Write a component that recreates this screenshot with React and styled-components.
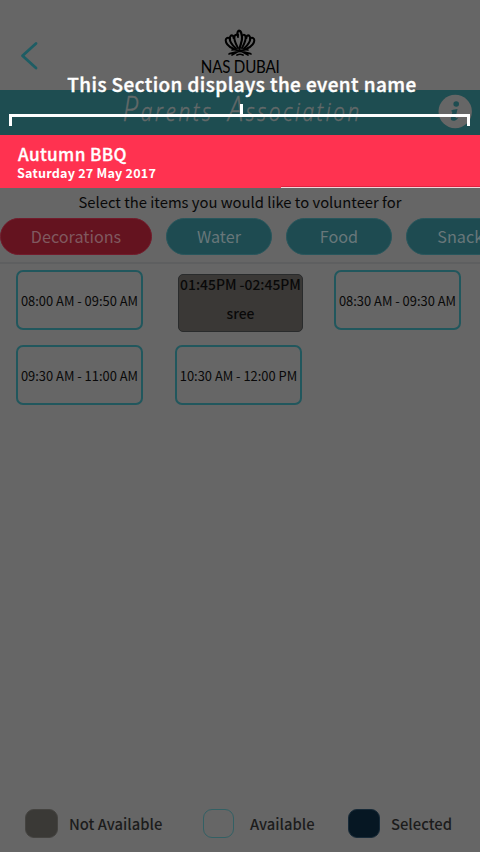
import React from 'react';
import styled, { createGlobalStyle } from 'styled-components';

const GlobalStyle = createGlobalStyle`
  * { box-sizing: border-box; }
  body { margin: 0; background: #666; overflow: hidden; }
`;

const Screen = styled.div`
  position: relative;
  display: flex;
  flex-direction: column;
  width: 480px;
  height: 852px;
  overflow: hidden;
  background: #666;
  color: #090909;
  font-family: "Noto Sans CJK SC", "Noto Sans", sans-serif;
  white-space: nowrap;
`;

const Header = styled.header`
  display: grid;
  grid-template-columns: 60px 360px 60px;
  height: 90px;
  flex: none;
`;

const BackButton = styled.button`
  display: block;
  align-self: start;
  border: 0;
  padding: 40px 0 0 20px;
  background: none;
  text-align: left;
  svg { display: block; }
`;

const Brand = styled.div`
  display: flex;
  flex-direction: column;
  align-items: center;
  padding-top: 28px;
  svg { display: block; }
`;

const BrandName = styled.div`
  height: 18px;
  font: 400 17px/18px Lato, sans-serif;
  letter-spacing: -0.25px;
  color: #000;
  transform: scaleX(0.89);
`;

const TitleBar = styled.div`
  display: grid;
  grid-template-columns: 60px 360px 60px;
  height: 45px;
  flex: none;
  background: #1e4d51;
`;

const Title = styled.h1`
  grid-column: 2;
  margin: 0;
  height: 45px;
  text-align: center;
  font: italic 300 26px/42px "Open Sans", sans-serif;
  letter-spacing: 3.3px;
  word-spacing: 8px;
  color: #636969;
  padding-left: 6px;
  transform: scaleX(0.8);
  &, span { -webkit-text-stroke: 0.5px #636969; }
`;

const Initial = styled.span`
  font-size: 34px;
  line-height: 1px;
`;

const InfoIcon = styled.div`
  padding: 4px 0 0 18px;
  svg { display: block; }
`;

const EventBanner = styled.section`
  display: flex;
  flex-direction: column;
  align-items: flex-start;
  position: relative;
  height: 53px;
  flex: none;
  padding: 8px 17px 0;
  background: #ff3250;
  color: #fff;
  &::after {
    content: "";
    position: absolute;
    left: 281px;
    right: 0;
    bottom: 0;
    height: 2px;
    background: linear-gradient(#e0213f 50%, #efd5d9 50%);
  }
`;

const EventName = styled.div`
  height: 20px;
  font-size: 17.2px;
  line-height: 21px;
  font-weight: 500;
  letter-spacing: 0.35px;
  padding-left: 1px;
  -webkit-text-stroke: 0.3px #fff;
`;

const EventDate = styled.div`
  font-size: 12.6px;
  line-height: 19px;
  font-weight: 700;
  letter-spacing: 0.2px;
`;

const Prompt = styled.p`
  margin: 0;
  height: 29px;
  flex: none;
  text-align: center;
  font-size: 14.8px;
  line-height: 28px;
`;

const Chips = styled.nav`
  display: flex;
  gap: 14px;
  height: 47px;
  flex: none;
  padding-top: 1px;
  border-bottom: 2px solid #5e5f60;
`;

const Chip = styled.button`
  flex: none;
  width: ${p => p.$w}px;
  height: 37px;
  padding: 0;
  border: 1px solid ${p => (p.$active ? '#721c2c' : '#28565c')};
  border-radius: 19px;
  background: ${p => (p.$active ? '#64131f' : '#1e4b51')};
  color: ${p => (p.$active ? '#80595f' : '#68777a')};
  font: 400 16.2px/35px "Noto Sans CJK SC", sans-serif;
`;

const Slots = styled.main`
  display: grid;
  grid-template-columns: repeat(3, 127px);
  grid-auto-rows: 60px;
  gap: 15px 32px;
  padding: 6px 16px 0;
  flex: 1;
  align-content: start;
`;

const Slot = styled.button`
  padding: 1px 0 0;
  border: 2px solid #21575d;
  border-radius: 7px;
  background: #666;
  color: #090909;
  font: 400 12.9px/55px "Noto Sans CJK SC", sans-serif;
`;

const TakenSlot = styled.div`
  width: 125px;
  height: 58px;
  margin: 4px 0 0 3px;
  border: 1px solid #292b2c;
  border-radius: 5px;
  background: #3a3836;
  text-align: center;
  font-size: 13.9px;
  line-height: 30px;
  font-weight: 500;
`;

const TakenTime = styled.div`
  height: 23px;
  line-height: 18px;
`;

const Legend = styled.footer`
  display: grid;
  grid-template-columns: 178px 145px 1fr;
  height: 57px;
  flex: none;
  padding: 14px 0 0 25px;
`;

const LegendItem = styled.div`
  display: flex;
  gap: ${p => p.$gap}px;
  height: 29px;
  font-size: 14.8px;
  line-height: 29px;
  font-weight: 500;
  color: #1c1c1c;
`;

const Swatch = styled.span`
  flex: none;
  width: ${p => p.$w}px;
  height: 29px;
  border: 1px solid ${p => p.$line};
  border-radius: 9px;
  background: ${p => p.$fill};
`;

const Coach = styled.div`
  position: absolute;
  top: 70px;
  left: 9px;
  width: 461px;
  color: #fff;
  svg { display: block; }
`;

const CoachText = styled.div`
  height: 34px;
  padding-left: 5px;
  text-align: center;
  font-size: 18.9px;
  line-height: 28px;
  font-weight: 500;
  letter-spacing: 0.45px;
  -webkit-text-stroke: 0.4px #fff;
`;

const CrownLogo = () => (
  <svg width="32" height="30" viewBox="0 0 32 30" fill="none" stroke="#000" strokeLinecap="round">
    <path d="M15.500 21C16.500 16 18.500 13 18 9c-.4-3-.5-5-2-6C14 2 12.500 5 14 7" strokeWidth="2.200" />
    <g strokeWidth="2">
      <path d="M14 20C12 16 9.500 12 10.500 8.500c.8-2.500 3.500-2 3.500.5" />
      <path d="M12 20.500C8 17 5 13 6 9 7 6.500 10 7 9.500 10" />
      <path d="M10 21C4 19 .8 14 2 11 3.500 8.500 6.500 10 6 12.500" />
      <path d="M18 20c2-4 4.500-8 3.500-11.500-.8-2.500-3.500-2-3.500.5" />
      <path d="M20 20.500c4-3.500 7-7.500 6-11.500-1-2.500-4-2-3.500 1" />
      <path d="M22 21c6-2 9.200-7 8-10-1.500-2.500-4.500-1-4 1.500" />
    </g>
    <path d="M8 22c3-1 5 .5 8 .5s5-1.500 8-.5M5 26c3-1 6-2.500 11-2.500S24 25 27 26M8 27l7-4M24 27l-7-4M13 27c2-1 4-1 6 0" strokeWidth="1.700" />
  </svg>
);

const SLOTS = [
  { time: '08:00 AM - 09:50 AM' },
  { time: '01:45PM -02:45PM', takenBy: 'sree' },
  { time: '08:30 AM - 09:30 AM' },
  { time: '09:30 AM - 11:00 AM' },
  { time: '10:30 AM - 12:00 PM' },
];

export default function App() {
  return (
    <Screen>
      <GlobalStyle />
      <Header>
        <BackButton aria-label="Back">
          <svg width="20" height="32" viewBox="0 0 20 32" fill="none">
            <path d="M16 3.500 2.500 15.700 16 28" stroke="#1e5d64" strokeWidth="2.8" strokeLinecap="round" strokeLinejoin="round" />
          </svg>
        </BackButton>
        <Brand>
          <CrownLogo />
          <BrandName>NAS DUBAI</BrandName>
        </Brand>
      </Header>
      <TitleBar>
        <Title><Initial>P</Initial>arents <Initial>A</Initial>ssociation</Title>
        <InfoIcon>
          <svg width="36" height="36" viewBox="0 0 36 36">
            <circle cx="17.2" cy="17.5" r="16.7" fill="#666" />
            <circle cx="18.2" cy="10" r="2.8" fill="#1e4d51" />
            <path d="M13.5 16.5c2-1 4-1.3 6-1.5L17.7 23c-.3 1.3.6 1.5 2.6.4-1.2 2.2-3 3.4-5 3.4-2 0-2.800-1.100-2.300-3l1.200-5.200c.2-1-.1-1.300-1.200-1.300z" fill="#1e4d51" />
          </svg>
        </InfoIcon>
      </TitleBar>
      <EventBanner>
        <EventName>Autumn BBQ</EventName>
        <EventDate>Saturday 27 May 2017</EventDate>
      </EventBanner>
      <Prompt>Select the items you would like to volunteer for</Prompt>
      <Chips>
        <Chip $w={152} $active>Decorations</Chip>
        <Chip $w={106}>Water</Chip>
        <Chip $w={106}>Food</Chip>
        <Chip $w={116}>Snacks</Chip>
      </Chips>
      <Slots>
        {SLOTS.map(s =>
          s.takenBy ? (
            <TakenSlot key={s.time}>
              <TakenTime>{s.time}</TakenTime>
              {s.takenBy}
            </TakenSlot>
          ) : (
            <Slot key={s.time}>{s.time}</Slot>
          )
        )}
      </Slots>
      <Legend>
        <LegendItem $gap={11}>
          <Swatch $w={33} $fill="#3a3936" $line="#444340" />
          Not Available
        </LegendItem>
        <LegendItem $gap={16}>
          <Swatch $w={31} $fill="transparent" $line="#336064" />
          Available
        </LegendItem>
        <LegendItem $gap={11}>
          <Swatch $w={32} $fill="#061723" $line="#172a38" />
          Selected
        </LegendItem>
      </Legend>
      <Coach>
        <CoachText>This Section displays the event name</CoachText>
        <svg width="461" height="22" viewBox="0 0 461 22" fill="none" stroke="#fff" strokeWidth="3">
          <path d="M1.5 22V11.5H459.500V22M232.500 0V11.5" />
        </svg>
      </Coach>
    </Screen>
  );
}
